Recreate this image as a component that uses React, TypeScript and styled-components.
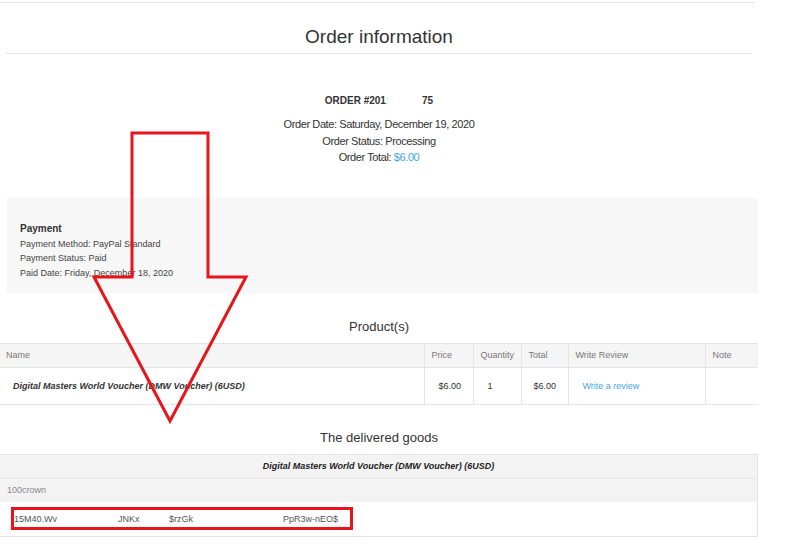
import styled, { createGlobalStyle } from "styled-components";

const LINK_BLUE = "#41a6ea";
const MARK_RED = "#e8141c";

const GlobalStyle = createGlobalStyle`
  html, body {
    margin: 0;
    padding: 0;
    background: #ffffff;
  }
  body {
    font-family: "Liberation Sans", Arial, sans-serif;
    color: #333;
  }
`;

const Page = styled.div`
  position: relative;
  width: 758px;
  height: 555px;
  overflow: hidden;
`;

const TopRule = styled.div`
  margin: 2px 3px 0 0;
  border-top: 1px solid #e6e6e6;
`;

const PageTitle = styled.h1`
  margin: 0 6px;
  padding: 22px 0 4px;
  font-size: 19px;
  font-weight: normal;
  text-align: center;
  color: #333;
  border-bottom: 1px solid #e2e2e2;
  line-height: 24px;
`;

const Summary = styled.div`
  display: flex;
  flex-direction: column;
  align-items: center;
  padding-top: 41px;
  font-size: 11px;
  letter-spacing: -0.4px;
  color: #333;
`;

const OrderNo = styled.div`
  font-weight: bold;
  font-size: 10px;
  letter-spacing: 0;
  margin-bottom: 10px;
  white-space: pre;
`;

const Faded = styled.span`
  color: #bbb;
  font-weight: normal;
`;

const SummaryLine = styled.div`
  line-height: 16.5px;
`;

const Money = styled.span`
  color: ${LINK_BLUE};
`;

const PaymentBox = styled.div`
  margin: 32px 0 0 7px;
  height: 95px;
  box-sizing: border-box;
  background: #f7f7f7;
  padding: 25px 13px 0;
  font-size: 9px;
  color: #444;
`;

const PaymentTitle = styled.div`
  font-size: 10px;
  font-weight: bold;
  color: #333;
  margin-bottom: 3px;
`;

const PaymentLine = styled.div`
  line-height: 14.7px;
`;

const SectionTitle = styled.h2<{ $top: number }>`
  margin: 0;
  padding: ${(p) => p.$top}px 0 8px;
  font-size: 13px;
  font-weight: normal;
  text-align: center;
  color: #333;
  line-height: 17px;
`;

const Table = styled.table`
  width: 758px;
  border-collapse: collapse;
  table-layout: fixed;
  font-size: 9px;
  border-top: 1px solid #e4e4e4;
  border-bottom: 1px solid #e4e4e4;
`;

const HeadCell = styled.th`
  height: 23px;
  padding: 0 0 0 7px;
  text-align: left;
  font-weight: normal;
  color: #777;
  background: #f5f5f5;
  border-left: 1px solid #e4e4e4;
  border-right: 1px solid #e4e4e4;
  &:first-child {
    border-left: none;
    padding-left: 6px;
  }
`;

const Cell = styled.td<{ $pad?: number }>`
  height: 36px;
  padding: 0 0 0 ${(p) => p.$pad ?? 14}px;
  color: #333;
  border-top: 1px solid #e4e4e4;
  border-left: 1px solid #e4e4e4;
  border-right: 1px solid #e4e4e4;
  &:first-child {
    border-left: none;
  }
`;

const ProductName = styled.span`
  font-weight: bold;
  font-style: italic;
`;

const ReviewLink = styled.a`
  color: ${LINK_BLUE};
  text-decoration: none;
`;

const GoodsHead = styled.td`
  height: 23px;
  padding: 0;
  text-align: center;
  background: #f3f3f3;
  font-weight: bold;
  font-style: italic;
  color: #222;
  border-right: 1px solid #e4e4e4;
`;

const GoodsLabel = styled.td`
  height: 23px;
  padding: 0 0 0 7px;
  background: #f3f3f3;
  color: #888;
  border-top: 1px solid #e6e6e6;
  border-right: 1px solid #e4e4e4;
`;

const GoodsCode = styled.td`
  height: 34px;
  padding: 0 0 0 11px;
  border-right: 1px solid #e4e4e4;
`;

const CodeMark = styled.div`
  display: flex;
  width: 342px;
  height: 23px;
  box-sizing: border-box;
  border: 3px solid ${MARK_RED};
  align-items: center;
  color: #555;
`;

const CodePart = styled.span<{ $w: number }>`
  width: ${(p) => p.$w}px;
  flex: none;
  overflow: hidden;
  white-space: nowrap;
`;

const Arrow = styled.svg`
  position: absolute;
  left: 0;
  top: 0;
  pointer-events: none;
`;

const productCols = [424, 49, 48, 47, 137, 53];

export default function App() {
  return (
    <Page>
      <GlobalStyle />
      <TopRule />
      <PageTitle>Order information</PageTitle>

      <Summary>
        <OrderNo>
          ORDER #201<Faded>:</Faded>
          {"            "}75
        </OrderNo>
        <SummaryLine>Order Date: Saturday, December 19, 2020</SummaryLine>
        <SummaryLine>Order Status: Processing</SummaryLine>
        <SummaryLine>
          Order Total: <Money>$6.00</Money>
        </SummaryLine>
      </Summary>

      <PaymentBox>
        <PaymentTitle>Payment</PaymentTitle>
        <PaymentLine>Payment Method: PayPal Standard</PaymentLine>
        <PaymentLine>Payment Status: Paid</PaymentLine>
        <PaymentLine>Paid Date: Friday, December 18, 2020</PaymentLine>
      </PaymentBox>

      <SectionTitle $top={25}>Product(s)</SectionTitle>
      <Table>
        <colgroup>
          {productCols.map((w, i) => (
            <col key={i} style={{ width: w }} />
          ))}
        </colgroup>
        <thead>
          <tr>
            <HeadCell>Name</HeadCell>
            <HeadCell>Price</HeadCell>
            <HeadCell>Quantity</HeadCell>
            <HeadCell>Total</HeadCell>
            <HeadCell>Write Review</HeadCell>
            <HeadCell>Note</HeadCell>
          </tr>
        </thead>
        <tbody>
          <tr>
            <Cell $pad={13}>
              <ProductName>Digital Masters World Voucher (DMW Voucher) (6USD)</ProductName>
            </Cell>
            <Cell>$6.00</Cell>
            <Cell>1</Cell>
            <Cell $pad={12}>$6.00</Cell>
            <Cell>
              <ReviewLink href="#">Write a review</ReviewLink>
            </Cell>
            <Cell />
          </tr>
        </tbody>
      </Table>

      <SectionTitle $top={24}>The delivered goods</SectionTitle>
      <Table>
        <tbody>
          <tr>
            <GoodsHead>Digital Masters World Voucher (DMW Voucher) (6USD)</GoodsHead>
          </tr>
          <tr>
            <GoodsLabel>100crown</GoodsLabel>
          </tr>
          <tr>
            <GoodsCode>
              <CodeMark>
                <CodePart $w={104}>15M40.Wv</CodePart>
                <CodePart $w={51}>JNKx</CodePart>
                <CodePart $w={114}>$rzGk</CodePart>
                <CodePart $w={66}>PpR3w-nEO$</CodePart>
              </CodeMark>
            </GoodsCode>
          </tr>
        </tbody>
      </Table>

      <Arrow width="758" height="555" viewBox="0 0 758 555">
        <polygon
          points="132,133 208,133 208,277 246,277 170,421 94,277 132,277"
          fill="none"
          stroke={MARK_RED}
          strokeWidth="3"
          strokeLinejoin="miter"
        />
      </Arrow>
    </Page>
  );
}
